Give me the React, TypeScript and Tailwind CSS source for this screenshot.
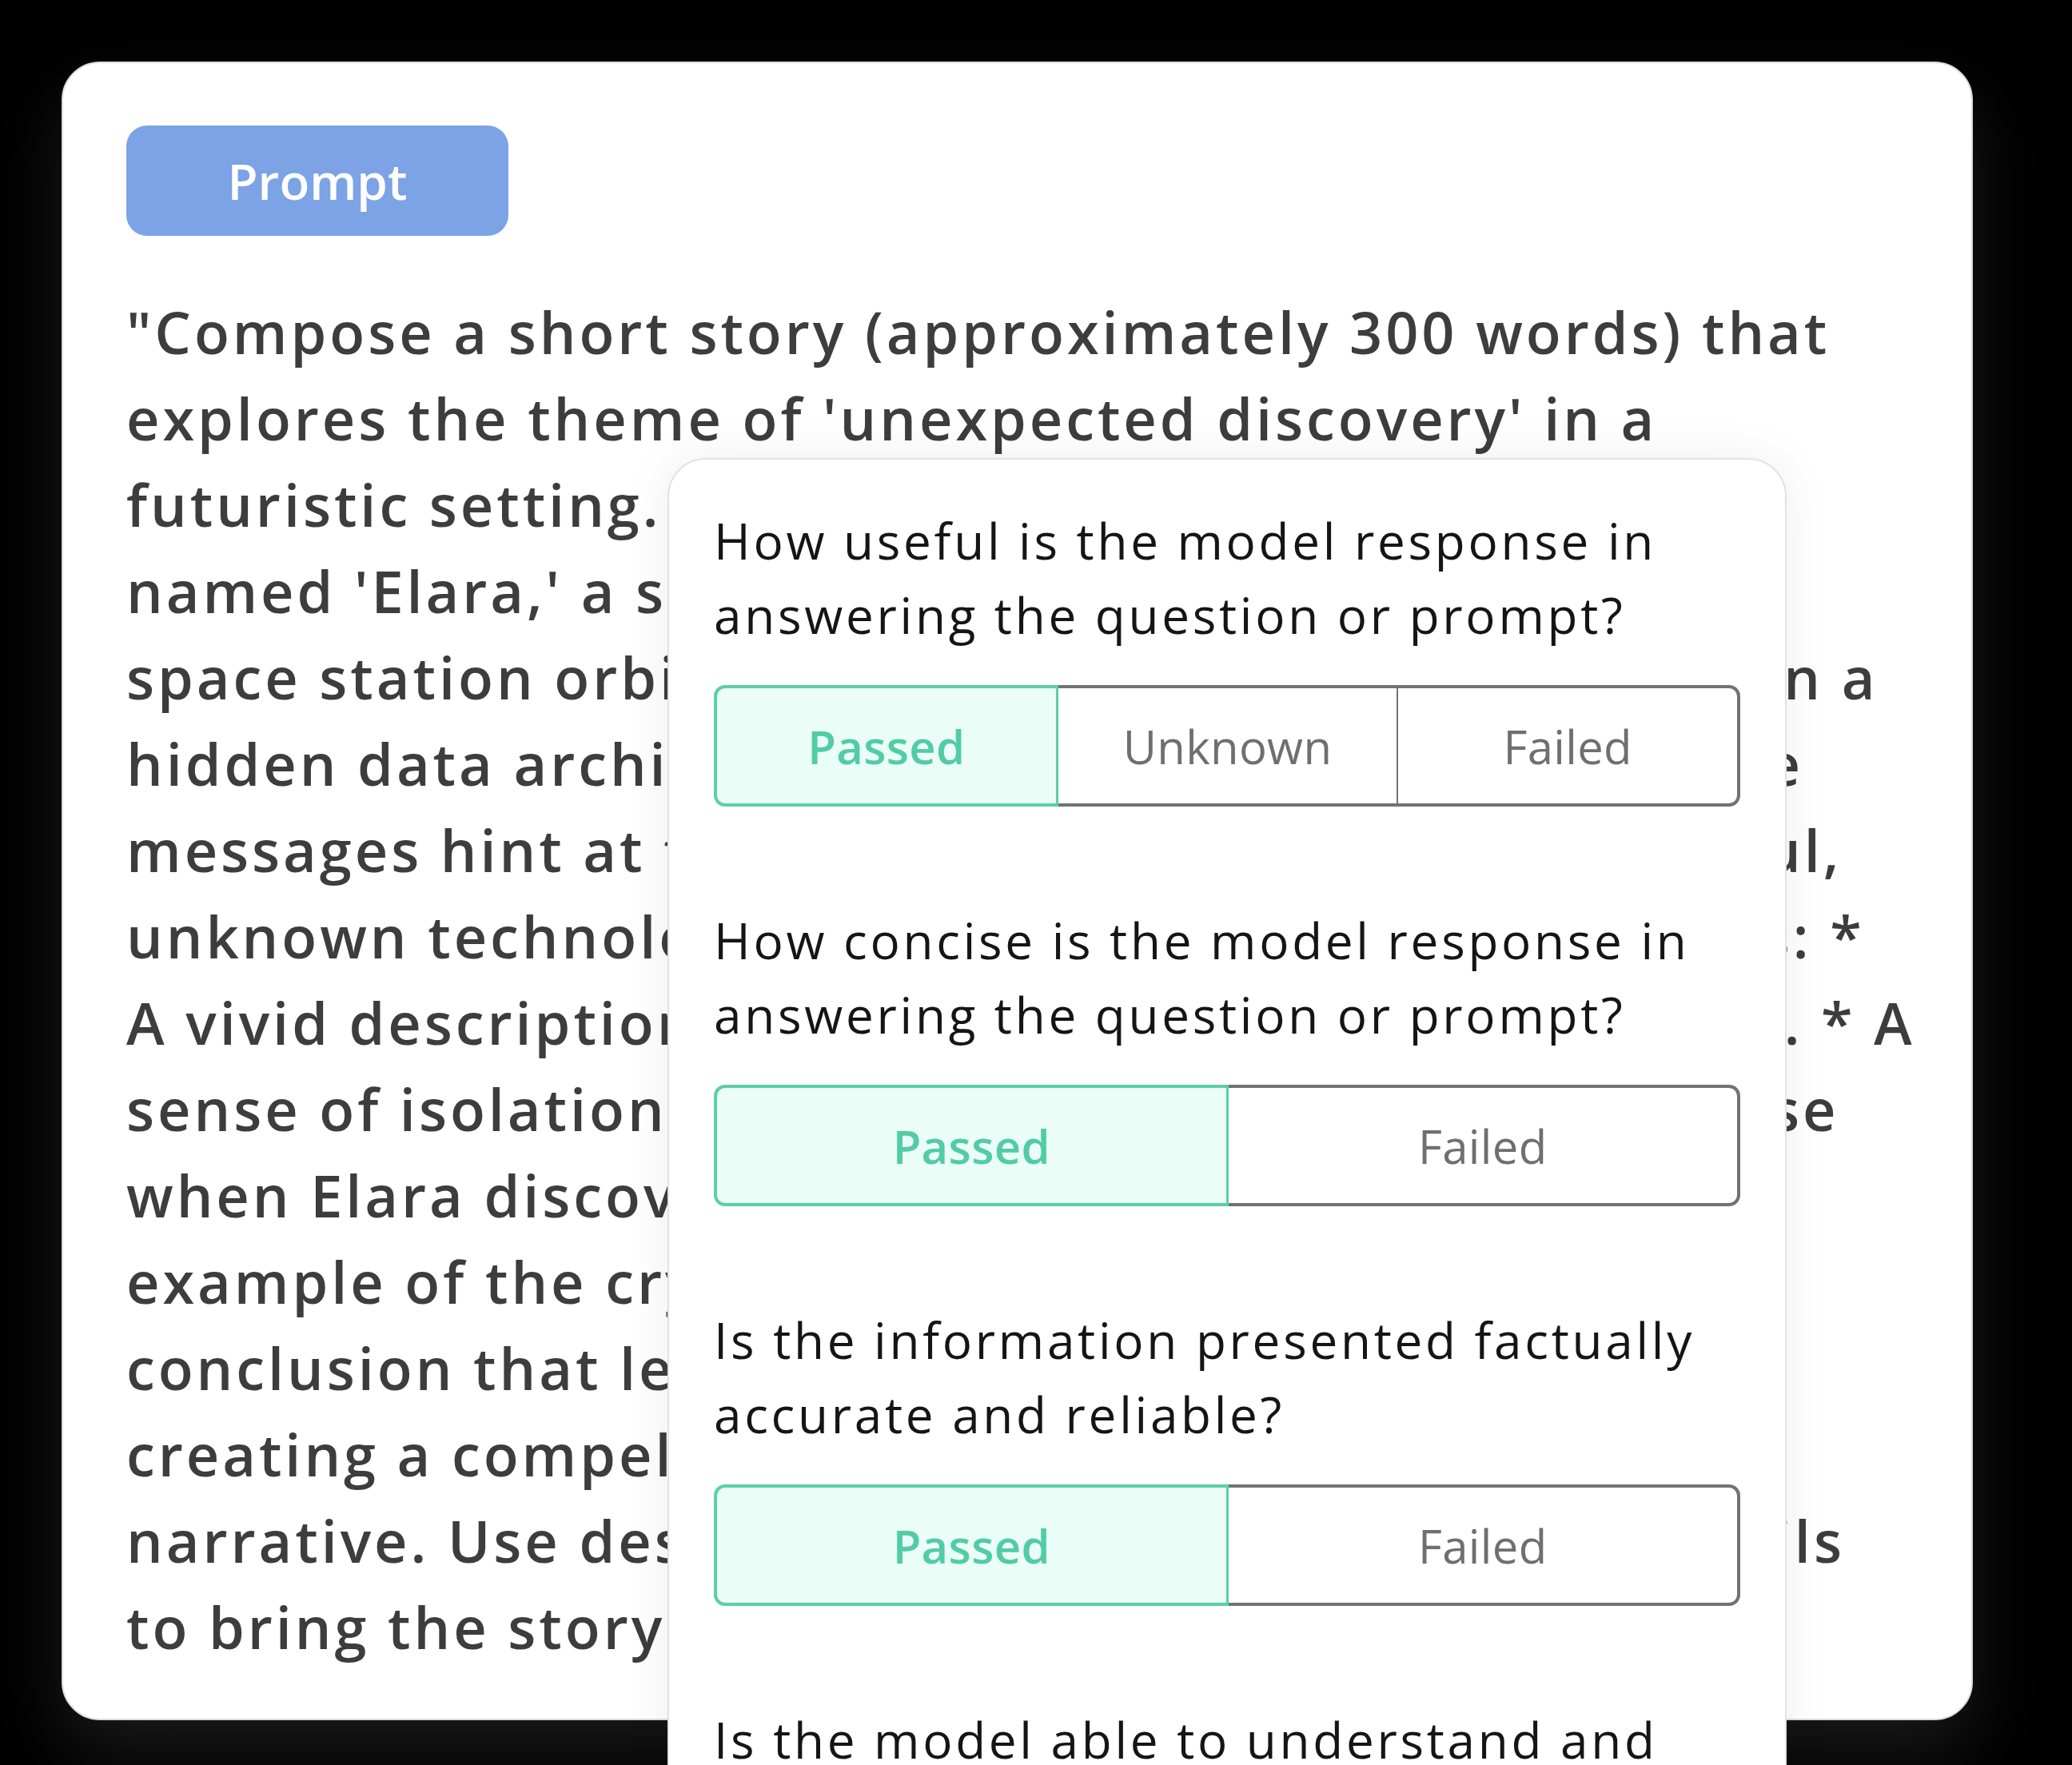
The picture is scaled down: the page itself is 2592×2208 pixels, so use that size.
import React from "react";

const promptLines = [
  "\"Compose a short story (approximately 300 words) that",
  "explores the theme of 'unexpected discovery' in a",
  "futuristic setting. The story should feature an AI",
  "named 'Elara,' a sentient system aboard a derelict",
  "space station orbiting Neptune, where she comes upon a",
  "hidden data archive of enigmatic transmissions. These",
  "messages hint at this existence of an ancient, powerful,",
  "unknown technology. Describe the following elements: *",
  "A vivid description of the space station's dark interior. * A",
  "sense of isolation and wonder. * A moment of suspense",
  "when Elara discovers the first message. * An",
  "example of the cryptic messages. * A",
  "conclusion that leaves room for interpretation,",
  "creating a compelling and thought-provoking",
  "narrative. Use descriptive language plus sensory details",
  "to bring the story to life.\"",
];

const questions = [
  { text: ["How useful is the model response in", "answering the question or prompt?"], options: ["Passed", "Unknown", "Failed"] },
  { text: ["How concise is the model response in", "answering the question or prompt?"], options: ["Passed", "Failed"] },
  { text: ["Is the information presented factually", "accurate and reliable?"], options: ["Passed", "Failed"] },
  { text: ["Is the model able to understand and", "follow the instructions given?"], options: ["Passed", "Failed"] },
];

const Segmented = ({ options }: { options: string[] }) => {
  return (
    <div className="mt-[41px] flex h-[152px] tracking-[0.02em]">
      {options.map((opt, i) => {
        const first = i === 0;
        const last = i === options.length - 1;
        if (first) {
          return (
            <div
              key={opt}
              className="flex flex-1 items-center justify-center rounded-l-[14px] border-4 border-r-[3px] border-[#5ccfa8] bg-[#eafdf6] text-[58px] font-semibold text-[#52cca5]"
            >
              {opt}
            </div>
          );
        }
        return (
          <div
            key={opt}
            className={
              last
                ? "flex flex-1 items-center justify-center rounded-r-[14px] border-y-4 border-r-4 border-[#727272] text-[58px] text-[#6f6f6f]"
                : "flex flex-1 items-center justify-center border-y-4 border-r-2 border-[#727272] text-[58px] text-[#6f6f6f]"
            }
          >
            {opt}
          </div>
        );
      })}
    </div>
  );
};

export default function App() {
  return (
    <div
      className="relative h-[2208px] w-[2592px] overflow-hidden bg-black pl-[77px] pt-[77px]"
      style={{ fontFamily: "'Open Sans', Lato, sans-serif" }}
    >
      <div className="w-[2391px] rounded-[48px] border-2 border-[#dcdcdc] bg-white px-[79px] pb-[61px] pt-[78px] shadow-[0_40px_90px_rgba(255,255,255,0.1)]">
        <div className="flex h-[138px] w-[478px] items-center justify-center rounded-[26px] bg-[#7ba3e6] text-[62px] font-semibold text-white">
          Prompt
        </div>
        <div className="mt-[66px] text-[72px] font-semibold leading-[108px] tracking-[0.055em] text-[#3d3d3d]">
          {promptLines.map((l) => (
            <div key={l} className="whitespace-nowrap">
              {l}
            </div>
          ))}
        </div>
      </div>

      <div className="absolute left-[835px] top-[573px] w-[1400px] rounded-t-[48px] border-2 border-[#e2e2e2] bg-white px-[56px] pb-[200px] pt-[55px] shadow-[0_0_60px_rgba(0,0,0,0.07)]">
        {questions.map((q, i) => (
          <div key={i} className={i === 0 ? "" : "mt-[121px]"}>
            <div className="text-[62px] leading-[93px] tracking-[0.06em] text-[#151515]">
              {q.text.map((t) => (
                <div key={t} className="whitespace-nowrap">
                  {t}
                </div>
              ))}
            </div>
            <Segmented options={q.options} />
          </div>
        ))}
      </div>
    </div>
  );
}
